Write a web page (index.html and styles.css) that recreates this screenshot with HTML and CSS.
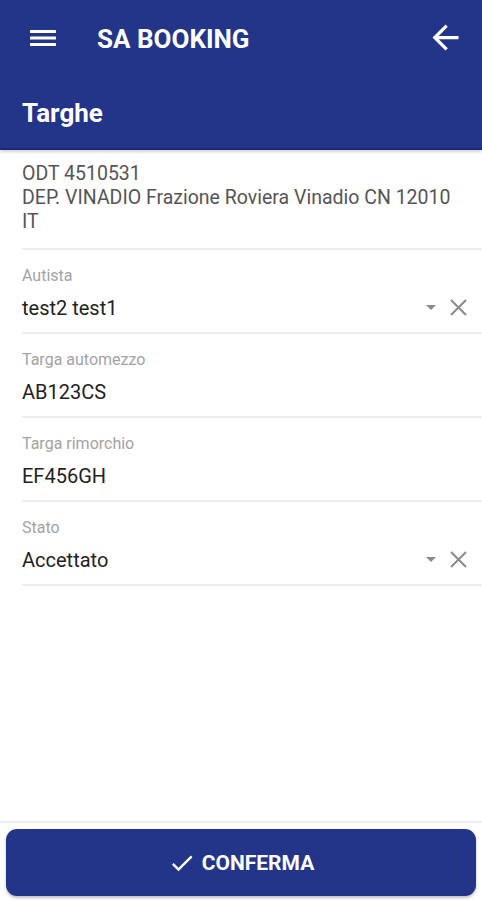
FILE: index.html
```html
<!DOCTYPE html>
<html lang="it">
<head>
<meta charset="utf-8">
<title>SA BOOKING</title>
<link rel="stylesheet" href="styles.css">
</head>
<body>
<div class="app">
  <header class="header">
    <div class="toolbar">
      <button class="icon-btn menu" aria-label="Menu">
        <svg width="26" height="20" viewBox="0 0 26 20"><rect x="0" y="2" width="26" height="3" rx="0.5" fill="#fff"/><rect x="0" y="8.5" width="26" height="3" rx="0.5" fill="#fff"/><rect x="0" y="15" width="26" height="3" rx="0.5" fill="#fff"/></svg>
      </button>
      <div class="app-title">SA BOOKING</div>
      <button class="icon-btn back" aria-label="Indietro">
        <svg width="39" height="39" viewBox="0 0 24 24"><path d="M20 11H7.83l5.59-5.59L12 4l-8 8 8 8 1.41-1.41L7.830 13H20v-2z" fill="#fff"/></svg>
      </button>
    </div>
    <div class="page-title">Targhe</div>
  </header>

  <main class="content">
    <div class="info">
      <div>ODT 4510531</div>
      <div>DEP. VINADIO Frazione Roviera Vinadio CN 12010 IT</div>
    </div>

    <div class="field">
      <div class="label">Autista</div>
      <div class="value-row">
        <span class="value">test2 test1</span>
        <span class="actions">
          <svg class="caret" width="10" height="5" viewBox="0 0 10 5"><path d="M0 0h10L5 5z" fill="#8a8a8a"/></svg>
          <svg class="clear" width="17" height="17" viewBox="0 0 17 17"><path d="M1 1L16 16M16 1L1 16" stroke="#8a8a8a" stroke-width="2"/></svg>
        </span>
      </div>
    </div>

    <div class="field">
      <div class="label">Targa automezzo</div>
      <div class="value-row"><span class="value">AB123CS</span></div>
    </div>

    <div class="field">
      <div class="label">Targa rimorchio</div>
      <div class="value-row"><span class="value">EF456GH</span></div>
    </div>

    <div class="field">
      <div class="label">Stato</div>
      <div class="value-row">
        <span class="value">Accettato</span>
        <span class="actions">
          <svg class="caret" width="10" height="5" viewBox="0 0 10 5"><path d="M0 0h10L5 5z" fill="#8a8a8a"/></svg>
          <svg class="clear" width="17" height="17" viewBox="0 0 17 17"><path d="M1 1L16 16M16 1L1 16" stroke="#8a8a8a" stroke-width="2"/></svg>
        </span>
      </div>
    </div>
  </main>

  <footer class="footer">
    <button class="confirm">
      <svg width="28" height="28" viewBox="0 0 24 24"><path d="M9 16.17L4.83 12l-1.42 1.41L9 19 21 7l-1.41-1.41z" fill="#fff"/></svg>
      <span>CONFERMA</span>
    </button>
  </footer>
</div>
</body>
</html>
```

FILE: styles.css
```css
* { box-sizing: border-box; }

html, body {
  margin: 0;
  padding: 0;
  background: #ffffff;
  font-family: Roboto, "Liberation Sans", Arial, sans-serif;
}

.app {
  height: 900px;
  display: flex;
  flex-direction: column;
}

.header {
  background: #233588;
  color: #fff;
  border-bottom: 2px solid #1a2878;
  box-shadow: 0 2px 3px rgba(0, 0, 0, 0.18);
  position: relative;
  z-index: 1;
}

.toolbar {
  height: 75px;
  display: flex;
  align-items: center;
  padding: 0 17px 0 30px;
}

.icon-btn {
  background: none;
  border: 0;
  padding: 0;
  display: flex;
  align-items: center;
  justify-content: center;
}

.menu { width: 26px; height: 20px; }

.app-title {
  margin-left: 41px;
  font-size: 26px;
  font-weight: 700;
  line-height: 30px;
  padding-top: 2px;
  flex: 1;
}

.back { width: 39px; height: 39px; }

.page-title {
  height: 73px;
  padding: 23px 22px 0;
  font-size: 26px;
  font-weight: 700;
  line-height: 30px;
}

.content {
  flex: 1;
  padding-left: 22px;
}

.info {
  padding: 11.5px 22px 14px 0;
  font-size: 19.5px;
  line-height: 24px;
  color: #555555;
  border-bottom: 2px solid #ececec;
}

.field {
  padding: 16px 0 12px;
  border-bottom: 2px solid #ececec;
}

.label {
  font-size: 16px;
  line-height: 19px;
  color: #a3a3a3;
}

.value-row {
  margin-top: 11px;
  height: 24px;
  display: flex;
  align-items: center;
  padding-right: 15px;
}

.value {
  flex: 1;
  font-size: 20px;
  line-height: 24px;
  color: #222;
}

.actions {
  display: flex;
  align-items: center;
  gap: 14px;
}

.caret { display: block; }
.clear { display: block; }

.footer {
  border-top: 2px solid #eeeeee;
  padding: 6px 6px 4px;
}

.confirm {
  width: 100%;
  height: 67px;
  border: 0;
  border-radius: 11px;
  background: #233588;
  color: #fff;
  font-family: Roboto, "Liberation Sans", Arial, sans-serif;
  font-size: 21px;
  font-weight: 700;
  display: flex;
  align-items: center;
  justify-content: center;
  gap: 6px;
  box-shadow: 0 2px 3px rgba(0, 0, 0, 0.25);
}
```
